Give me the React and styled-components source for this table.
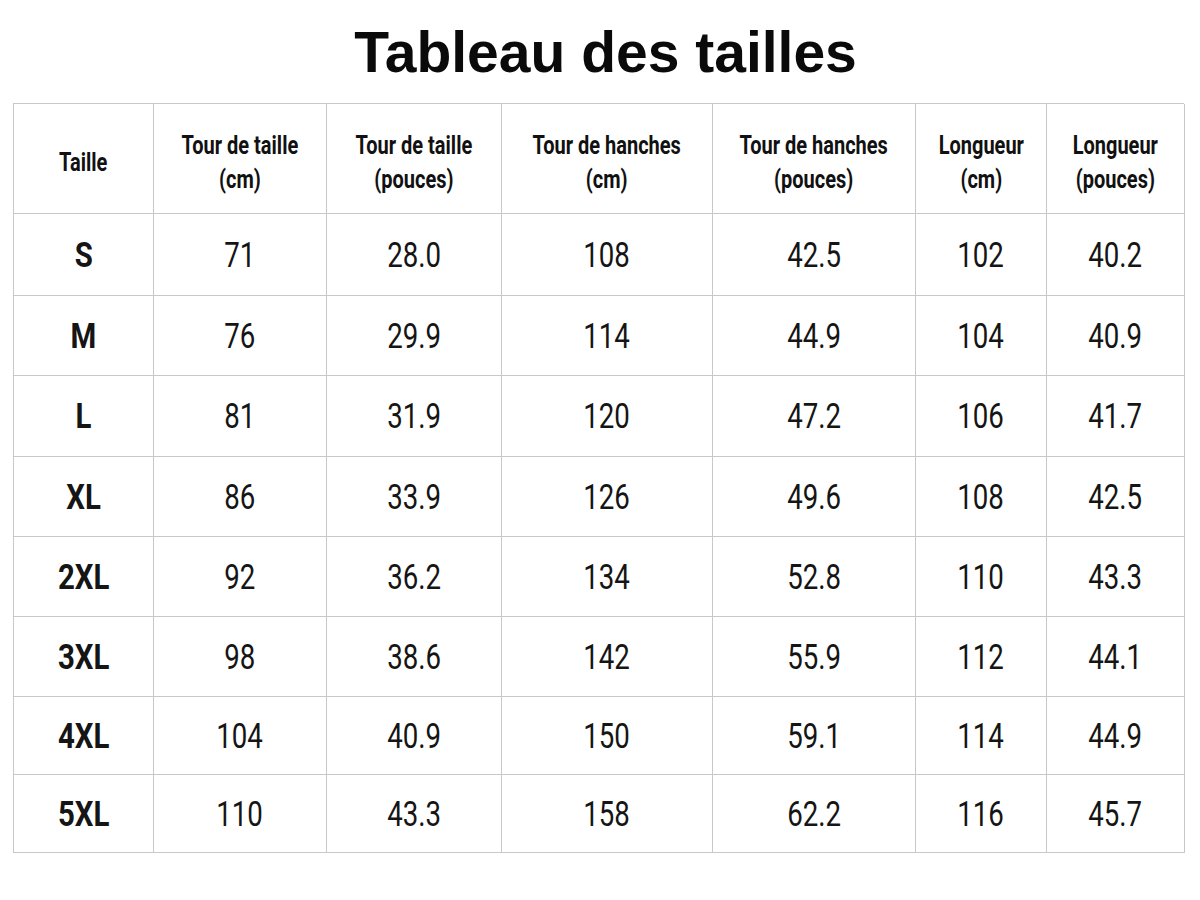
import React from 'react';
import styled, { createGlobalStyle } from 'styled-components';

const GlobalStyle = createGlobalStyle`
  * { box-sizing: border-box; }
  body {
    margin: 0;
    background: #ffffff;
    font-family: Roboto, "Liberation Sans", sans-serif;
    color: #111;
  }
`;

const Page = styled.div`
  width: 1200px;
  height: 900px;
  padding: 24px 16px 0 13px;
`;

const Title = styled.h1`
  margin: 0 0 22px;
  font-family: "Liberation Sans", Arial, sans-serif;
  font-weight: 700;
  font-size: 57px;
  line-height: 57px;
  text-align: center;
  color: #0a0a0a;
  padding-left: 14px;
`;

const Grid = styled.div`
  display: grid;
  grid-template-columns: 140px 173px 175px 211px 203px 131px 138px;
  grid-template-rows: 110px 82px 80px 81px 80px 80px 80px 78px 78px;
  border-top: 1.5px solid #c8c8c8;
  border-left: 1.5px solid #c8c8c8;
  width: 1171px;
`;

const Cell = styled.div`
  display: flex;
  align-items: center;
  justify-content: center;
  border-right: 1.5px solid #c8c8c8;
  border-bottom: 1.5px solid #c8c8c8;
  text-align: center;
`;

const HeadText = styled.span`
  display: inline-block;
  font-weight: 700;
  font-size: 25px;
  line-height: 34px;
  color: #111;
  transform: scaleX(0.8);
  white-space: nowrap;
  padding-top: 8px;
`;

const Value = styled.span`
  display: inline-block;
  font-size: 35px;
  font-weight: ${(p) => (p.$bold ? 700 : 400)};
  color: #151515;
  transform: scaleX(${(p) => (p.$bold ? 0.84 : 0.79)});
  padding-top: 1px;
`;

const headers = [
  ['Taille'],
  ['Tour de taille', '(cm)'],
  ['Tour de taille', '(pouces)'],
  ['Tour de hanches', '(cm)'],
  ['Tour de hanches', '(pouces)'],
  ['Longueur', '(cm)'],
  ['Longueur', '(pouces)'],
];

const rows = [
  ['S', '71', '28.0', '108', '42.5', '102', '40.2'],
  ['M', '76', '29.9', '114', '44.9', '104', '40.9'],
  ['L', '81', '31.9', '120', '47.2', '106', '41.7'],
  ['XL', '86', '33.9', '126', '49.6', '108', '42.5'],
  ['2XL', '92', '36.2', '134', '52.8', '110', '43.3'],
  ['3XL', '98', '38.6', '142', '55.9', '112', '44.1'],
  ['4XL', '104', '40.9', '150', '59.1', '114', '44.9'],
  ['5XL', '110', '43.3', '158', '62.2', '116', '45.7'],
];

export default function App() {
  return (
    <>
      <GlobalStyle />
      <Page>
        <Title>Tableau des tailles</Title>
        <Grid>
          {headers.map((lines, i) => (
            <Cell key={'h' + i}>
              <HeadText>
                {lines.map((l, j) => (
                  <div key={j}>{l}</div>
                ))}
              </HeadText>
            </Cell>
          ))}
          {rows.map((row) =>
            row.map((v, i) => (
              <Cell key={row[0] + i}>
                <Value $bold={i === 0}>{v}</Value>
              </Cell>
            ))
          )}
        </Grid>
      </Page>
    </>
  );
}
